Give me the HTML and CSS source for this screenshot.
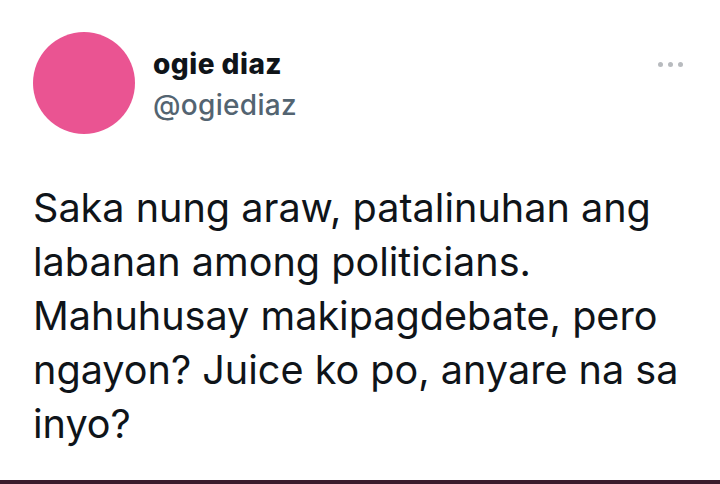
FILE: index.html
```html
<!DOCTYPE html>
<html>
<head>
<meta charset="utf-8">
<link rel="stylesheet" href="styles.css">
</head>
<body>
<div class="page">
  <div class="tweet">
    <div class="header">
      <div class="avatar"></div>
      <div class="names">
        <div class="name">ogie diaz</div>
        <div class="handle">@ogiediaz</div>
      </div>
      <div class="more"><span></span><span></span><span></span></div>
    </div>
    <p class="text">Saka nung araw, patalinuhan ang labanan among politicians. Mahuhusay makipagdebate, pero ngayon? Juice ko po, anyare na sa inyo?</p>
  </div>
  <div class="bar"></div>
</div>
</body>
</html>
```
FILE: styles.css
```css
html, body { margin: 0; padding: 0; background: #fff; }
.page { width: 720px; height: 484px; display: flex; flex-direction: column; overflow: hidden; }
.tweet { flex: 1; padding: 32px 16px 0 33px; font-family: Inter, "Noto Sans", sans-serif; color: #0f1419; }
.header { display: flex; align-items: flex-start; }
.avatar { width: 102px; height: 102px; border-radius: 50%; background: #ea5492; flex: none; }
.names { margin-left: 18px; margin-top: 15px; flex: 1; }
.name { font-weight: 800; font-size: 28px; line-height: 34px; letter-spacing: 0.5px; }
.handle { font-size: 28px; line-height: 34px; margin-top: 7px; color: #536471; font-weight: 500; letter-spacing: 0.3px; }
.more { display: flex; gap: 5px; margin-top: 30px; margin-right: 21px; }
.more span { width: 5px; height: 5px; border-radius: 50%; background: #b8bbbf; }
.text { margin: 47px 0 0 0; font-size: 39.6px; line-height: 54px; font-weight: 400; }
.bar { height: 4px; background: #3a1c2c; flex: none; }
```
